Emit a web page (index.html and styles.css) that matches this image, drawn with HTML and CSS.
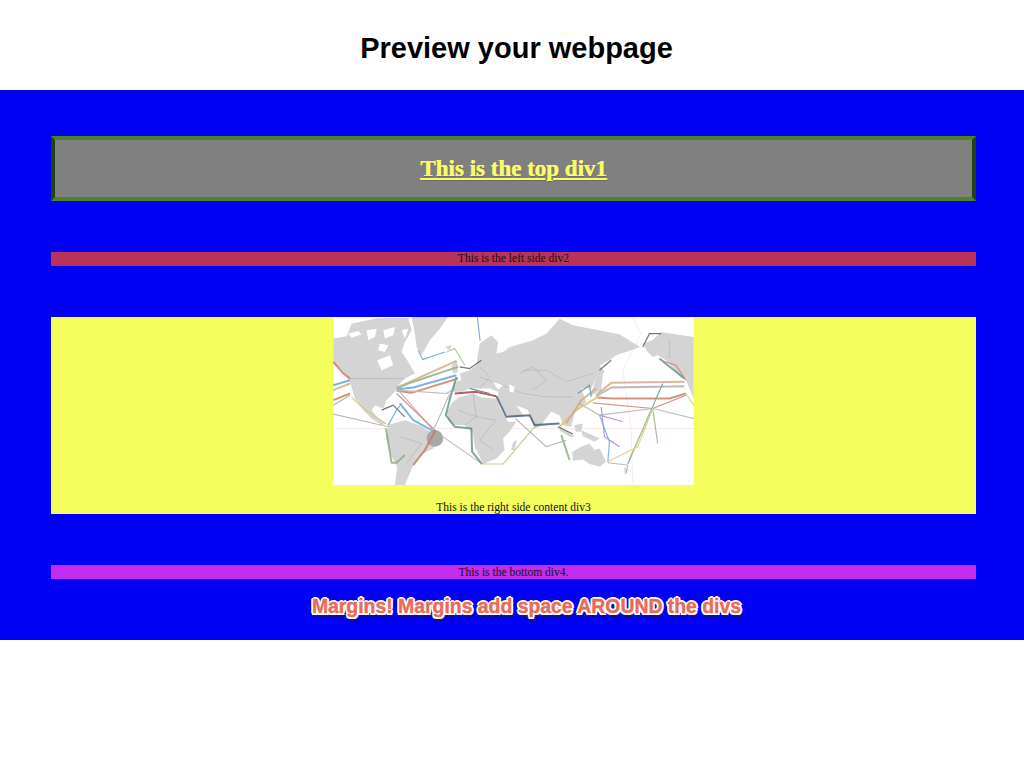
FILE: index.html
```html
<!DOCTYPE html>
<html lang="en">
<head>
<meta charset="utf-8">
<title>Preview your webpage</title>
<link rel="stylesheet" href="styles.css">
</head>
<body>
<header class="title-bar"><h1 class="title">Preview your webpage</h1></header>
<main class="stage">
  <div class="box top-div"><h2 class="top-heading">This is the top div1</h2></div>
  <div class="box left-div">This is the left side div2</div>
  <div class="box right-div">
    <svg class="map" viewBox="0 20 1083 505" role="img" aria-label="World map of submarine cables">
      <rect class="sea" x="0" y="20" width="1083" height="505"/>
      <g class="zones">
        <polyline points="900,20 925,70 870,180 895,355 900,520"/>
        <polyline points="0,355 1083,355"/>
      </g>
      <g class="land">
        <polygon points="235,20 345,20 320,55 290,90 265,135 250,110 245,70"/>
        <polygon points="335,110 355,105 350,120"/>
        <polygon points="0,85 40,78 55,40 130,24 225,22 236,60 215,95 205,125 222,150 245,190 215,205 195,225 185,245 160,270 150,295 125,285 115,300 130,320 160,340 145,345 115,325 85,295 65,265 50,215 20,175 0,160"/>
        <polygon points="165,345 215,330 262,347 325,385 300,415 270,430 240,465 215,525 185,525 192,470 170,430 158,380"/>
        <polygon points="342,305 355,280 375,262 420,250 445,262 490,265 505,300 525,335 550,335 530,365 510,385 515,420 490,445 450,462 440,440 425,410 420,370 395,345 360,345 345,330"/>
        <polygon points="540,395 552,390 545,420 535,420"/>
        <polygon points="358,245 365,215 385,210 380,190 410,180 430,165 435,130 440,100 475,75 495,95 490,130 510,125 530,110 600,90 640,70 680,25 720,45 790,58 860,72 922,110 880,125 850,135 830,150 800,165 815,185 790,205 775,235 745,235 760,275 725,310 715,350 690,345 680,315 655,305 625,345 605,355 585,300 550,285 575,320 525,320 495,265 495,245 470,235 440,235 410,235 385,245"/>
        <polygon points="355,165 372,150 375,185 360,190"/>
        <polygon points="790,205 812,175 805,240 772,258"/>
        <polygon points="930,100 960,90 985,65 1083,80 1083,265 1060,210 1040,195 1000,150 975,135 960,140 945,125"/>
        <polygon points="718,425 745,410 770,400 785,420 800,415 820,455 800,470 770,462 750,448 720,452"/>
        <polygon points="875,470 885,480 875,495"/>
        <polygon points="680,350 725,378 715,382 680,362"/>
        <polygon points="745,360 800,385 785,395 750,378"/>
        <polygon points="725,345 750,340 745,365 728,365"/>
      </g>
      <g class="borders">
        <polyline points="50,205 215,205"/>
        <polyline points="375,300 430,320 490,330 440,390 480,420"/>
        <polyline points="420,250 430,320 395,345"/>
        <polyline points="570,180 640,180 700,215 780,190"/>
        <polyline points="440,200 520,230 570,250 640,260 720,260"/>
        <polyline points="440,170 470,200 440,235"/>
        <polyline points="560,190 600,170 640,210 600,240"/>
        <polyline points="200,380 265,400 220,460"/>
        <polyline points="1010,85 1010,145"/>
      </g>
      <g class="white-patch">
        <polygon points="132,150 170,135 180,165 145,180"/>
        <polygon points="480,215 510,225 495,238"/>
        <polygon points="528,222 545,230 542,248 530,245"/>
        <polygon points="100,60 130,55 125,80 105,90"/>
        <polygon points="150,60 185,50 180,75 155,85"/>
        <polygon points="45,70 75,62 85,72 55,82"/>
        <polygon points="140,100 165,105 155,125 135,120"/>
        <polygon points="205,60 225,55 215,85"/>
      </g>
      <circle class="shade" cx="305" cy="385" r="25"/>
      <g class="cables">
        <polyline class="c-blue" points="433,20 441,92"/>
        <polyline class="c-blue" points="255,120 268,148 335,125"/>
        <polyline class="c-olive" points="340,125 365,115 395,165"/>
        <polyline class="c-tan w3" points="190,232 215,222 370,152"/>
        <polyline class="c-green w3" points="190,235 225,220 375,170"/>
        <polyline class="c-blue w3" points="190,238 240,232 370,195"/>
        <polyline class="c-rust w3" points="190,242 235,248 375,205"/>
        <polyline class="c-gray" points="190,240 340,250 365,235"/>
        <polyline class="c-rust w3" points="0,155 30,190 50,205"/>
        <polyline class="c-blue w3" points="0,225 50,210"/>
        <polyline class="c-tan w3" points="0,240 50,220"/>
        <polyline class="c-rust w3" points="0,270 50,250"/>
        <polyline class="c-green" points="0,285 50,255"/>
        <polyline class="c-yellow" points="55,262 95,298 165,345"/>
        <polyline class="c-gray" points="0,312 165,350"/>
        <polyline class="c-green w3" points="158,355 175,458 190,458 215,435"/>
        <polyline class="c-blue" points="165,345 190,300 205,280"/>
        <polyline class="c-gray" points="195,240 300,360 445,460"/>
        <polyline class="c-rust" points="190,250 310,365"/>
        <polyline class="c-blue w3" points="200,280 240,330 305,365"/>
        <polyline class="c-rust w3" points="305,365 275,420 240,465"/>
        <polyline class="c-gray" points="350,250 310,340 295,365"/>
        <polyline class="c-teal w3" points="370,200 352,260 338,315 365,350 415,355 417,425 447,462"/>
        <polyline class="c-olive" points="447,462 510,462 550,415 605,350 660,340"/>
        <polyline class="c-red w3" points="365,250 430,245 490,258"/>
        <polyline class="c-navy w3" points="490,258 520,320 590,315 605,345 680,340"/>
        <polyline class="c-gray" points="547,325 640,410 700,390"/>
        <polyline class="c-green w3" points="685,375 710,450"/>
        <polyline class="c-yellow w3" points="680,350 730,300 795,260"/>
        <polyline class="c-tan w3" points="700,340 745,270 790,235"/>
        <polyline class="c-teal" points="735,250 770,225 775,260"/>
        <polyline class="c-tan w3" points="790,255 835,218 1055,215"/>
        <polyline class="c-gray w3" points="790,258 835,232 1055,228"/>
        <polyline class="c-rust w3" points="795,262 835,265 1010,265 1060,250"/>
        <polyline class="c-rust" points="780,278 960,295 1060,255"/>
        <polyline class="c-gray" points="740,280 800,315 960,295 1083,325"/>
        <polyline class="c-purple" points="800,315 870,335"/>
        <polyline class="c-purple" points="805,290 815,380 860,410"/>
        <polyline class="c-blue" points="800,315 830,395 825,455"/>
        <polyline class="c-green" points="960,295 975,400"/>
        <polyline class="c-teal" points="990,220 885,462"/>
        <polyline class="c-olive" points="960,295 890,445"/>
        <polyline class="c-yellow" points="960,295 915,410 825,455"/>
        <polyline class="c-gray" points="825,458 885,465 880,490"/>
        <polyline class="c-teal w3" points="980,145 1055,205"/>
        <polyline class="c-rust" points="985,150 1030,165 1060,210"/>
        <polyline class="c-yellow" points="1060,250 1083,285"/>
        <polyline class="c-dark" points="380,170 410,175 445,150"/>
        <polyline class="c-dark" points="145,300 180,285 215,320"/>
        <polyline class="c-dark" points="675,350 720,372"/>
        <polyline class="c-dark" points="930,110 950,70 985,70"/>
        <polyline class="c-dark" points="410,235 470,250"/>
        <polyline class="c-dark" points="800,180 835,150"/>
      </g>
    </svg>
    <p class="caption">This is the right side content div3</p>
  </div>
  <div class="box bottom-div">This is the bottom div4.</div>
  <p class="margin-note">Margins! Margins add space AROUND the divs</p>
</main>
</body>
</html>
```
FILE: styles.css
```css
* { box-sizing: border-box; }
html, body { margin: 0; background: #fff; }
body { height: 768px; overflow: hidden; }
.title-bar { height: 90px; padding: 30px 0 0 9px; text-align: center; }
.title {
  margin: 0;
  font: bold 29px/36px "Liberation Sans", Arial, sans-serif;
  color: #000;
}
.stage {
  height: 550px;
  background: #0000f5;
  padding: 46px 48px 0 51px;
  font: 11.55px/13px "Liberation Serif", "Times New Roman", serif;
  color: #111;
  text-align: center;
}
.box { width: 100%; }
.top-div {
  height: 65px;
  background: #808080;
  border: 4px solid #4d8228;
  border-left-color: #1f4410;
  border-right-color: #1f4410;
  display: flex;
  align-items: center;
  justify-content: center;
}
.top-heading {
  margin: 0;
  font: bold 23px/26px "Liberation Serif", "Times New Roman", serif;
  color: #fbfb66;
  text-decoration: underline;
  text-shadow: .5px 0 0 #fbfb66, 1px 1px 1px #6a6a6a;
}
.left-div { height: 14px; margin-top: 51px; background: #b8325a; }
.right-div { height: 197px; margin-top: 51px; background: #f4ff5e; }
.map { display: block; width: 361px; height: 168px; margin: 0 auto 0 282px; filter: blur(.4px); }
.caption { margin: 16px 0 0; height: 13px; }
.bottom-div { height: 14px; margin-top: 51px; padding-top: 1px; background: #c22df0; }
.margin-note {
  margin: 14px 0 0;
  padding-left: 26px;
  font: bold 19.4px/26px "Liberation Sans", Arial, sans-serif;
  color: #e96a56;
  -webkit-text-stroke: .4px #e96a56;
  text-shadow: 2px 0 0 #fff, -2px 0 0 #fff, 0 2px 0 #fff, 0 -2px 0 #fff, 1.5px 1.5px 0 #fff, -1.5px 1.5px 0 #fff, 1.5px -1.5px 0 #fff, -1.5px -1.5px 0 #fff, 1px 4px 2px #222;
}
.sea { fill: #fff; }
.land polygon { fill: #d4d4d4; }
.zones polyline { fill: none; stroke: #f2dfe2; stroke-width: 2; }
.borders polyline { fill: none; stroke: #aaa; stroke-width: 1.5; }
.white-patch polygon { fill: #fff; }
.shade { fill: #a9a9a9; }
.cables { opacity: .8; }
.cables polyline { fill: none; stroke-width: 3.5; stroke-linejoin: round; }
.cables .w3 { stroke-width: 6; }
.c-blue { stroke: #5aa3cf; }
.c-olive { stroke: #a3c57e; }
.c-tan { stroke: #cfa77f; }
.c-rust { stroke: #c9795f; }
.c-green { stroke: #8cab7e; }
.c-gray { stroke: #aaa; }
.c-yellow { stroke: #d8c76b; }
.c-teal { stroke: #5f8f8c; }
.c-red { stroke: #a5363a; }
.c-navy { stroke: #3f5c78; }
.c-purple { stroke: #a47cbc; }
.c-dark { stroke: #555; }
```
